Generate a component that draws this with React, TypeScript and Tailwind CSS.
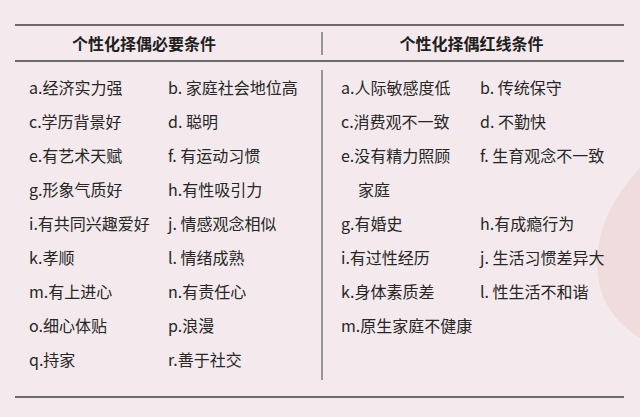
const leftItems: [string, string][] = [
  ["a.经济实力强", "b. 家庭社会地位高"],
  ["c.学历背景好", "d. 聪明"],
  ["e.有艺术天赋", "f. 有运动习惯"],
  ["g.形象气质好", "h.有性吸引力"],
  ["i.有共同兴趣爱好", "j. 情感观念相似"],
  ["k.孝顺", "l. 情绪成熟"],
  ["m.有上进心", "n.有责任心"],
  ["o.细心体贴", "p.浪漫"],
  ["q.持家", "r.善于社交"],
];

const rightItems: [string, string][] = [
  ["a.人际敏感度低", "b. 传统保守"],
  ["c.消费观不一致", "d. 不勤快"],
  ["e.没有精力照顾", "f. 生育观念不一致"],
  ["家庭", ""],
  ["g.有婚史", "h.有成瘾行为"],
  ["i.有过性经历", "j. 生活习惯差异大"],
  ["k.身体素质差", "l. 性生活不和谐"],
  ["m.原生家庭不健康", ""],
];

function Rows({ items }: { items: [string, string][] }) {
  return (
    <div className="flex flex-col">
      {items.map(([a, b], i) => (
        <div key={i} className="grid grid-cols-[139px_1fr] h-[34px] items-center">
          {/* the wrapped half of a long item sits indented */}
          <span className={a === "家庭" ? "pl-[17px] whitespace-nowrap" : "whitespace-nowrap"}>{a}</span>
          <span className="whitespace-nowrap">{b}</span>
        </div>
      ))}
    </div>
  );
}

export default function App() {
  return (
    <div
      className="relative w-[640px] h-[417px] overflow-hidden bg-[#f4eaed] text-[#262626] text-[16px]"
      style={{ fontFamily: '"Noto Sans CJK SC", "Noto Sans", sans-serif' }}
    >
      {/* pink blob on the right edge */}
      <svg className="absolute right-0 top-0" width="640" height="417" viewBox="0 0 640 417">
        <path
          d="M640 168 C615 195 598 225 597 262 C597 300 615 322 640 338 Z"
          fill="#f0dcdd"
        />
      </svg>

      <div className="relative mx-[15px] mt-[24px] w-[609px] h-[374px] border-t-2 border-b-2 border-[#6e6a6b] flex flex-col">
        {/* header */}
        <div className="flex h-[36px] border-b-2 border-[#6e6a6b] font-bold text-[16px] text-[#1f1f1f]">
          <div className="w-[306px] flex items-center pl-[57px]">个性化择偶必要条件</div>
          <div className="flex items-center">
            <div className="w-[2px] h-[23px] bg-[#999496]" />
          </div>
          <div className="flex-1 flex items-center justify-center pr-[4px]">个性化择偶红线条件</div>
        </div>

        {/* body */}
        <div className="flex pt-[8px]">
          <div className="w-[306px] pl-[14px]">
            <Rows items={leftItems} />
          </div>
          <div className="w-[2px] h-[310px] bg-[#999496]" />
          <div className="flex-1 pl-[18px]">
            <Rows items={rightItems} />
          </div>
        </div>
      </div>
    </div>
  );
}
